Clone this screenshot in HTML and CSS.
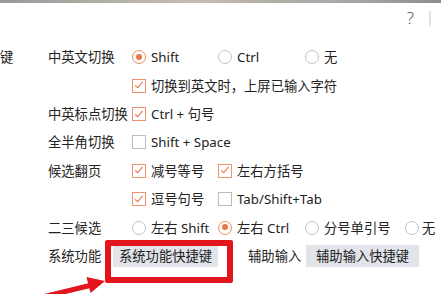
FILE: index.html
```html
<!DOCTYPE html>
<html lang="zh-CN">
<head>
<meta charset="utf-8">
<title>快捷键设置</title>
<link rel="stylesheet" href="styles.css">
</head>
<body>
<div class="topbar"></div>
<header class="titlebar">
  <span class="help">?</span>
  <span class="sep"></span>
</header>
<main class="settings">
  <div class="row">
    <div class="side">键</div>
    <div class="label">中英文切换</div>
    <div class="opts">
      <span class="opt"><i class="radio on"></i>Shift</span>
      <span class="opt"><i class="radio"></i>Ctrl</span>
      <span class="opt"><i class="radio"></i>无</span>
    </div>
  </div>
  <div class="row">
    <div class="side"></div>
    <div class="label"></div>
    <div class="opts">
      <span class="opt wide"><i class="check on"></i>切换到英文时，上屏已输入字符</span>
    </div>
  </div>
  <div class="row">
    <div class="side"></div>
    <div class="label">中英标点切换</div>
    <div class="opts">
      <span class="opt wide"><i class="check on"></i>Ctrl + 句号</span>
    </div>
  </div>
  <div class="row">
    <div class="side"></div>
    <div class="label">全半角切换</div>
    <div class="opts">
      <span class="opt wide"><i class="check"></i>Shift + Space</span>
    </div>
  </div>
  <div class="row">
    <div class="side"></div>
    <div class="label">候选翻页</div>
    <div class="opts">
      <span class="opt"><i class="check on"></i>减号等号</span>
      <span class="opt"><i class="check on"></i>左右方括号</span>
    </div>
  </div>
  <div class="row">
    <div class="side"></div>
    <div class="label"></div>
    <div class="opts">
      <span class="opt"><i class="check on"></i>逗号句号</span>
      <span class="opt"><i class="check"></i>Tab/Shift+Tab</span>
    </div>
  </div>
  <div class="row">
    <div class="side"></div>
    <div class="label">二三候选</div>
    <div class="opts">
      <span class="opt"><i class="radio"></i>左右 Shift</span>
      <span class="opt"><i class="radio on"></i>左右 Ctrl</span>
      <span class="opt"><i class="radio"></i>分号单引号</span>
      <span class="opt last"><i class="radio"></i>无</span>
    </div>
  </div>
  <div class="row btnrow">
    <div class="side"></div>
    <div class="blabel">系统功能</div>
    <button class="btn">系统功能快捷键</button>
    <div class="blabel second">辅助输入</div>
    <button class="btn wide">辅助输入快捷键</button>
  </div>
</main>
<div class="highlight"></div>
<svg class="arrow" width="441" height="294" viewBox="0 0 441 294">
  <line x1="30" y1="300" x2="90" y2="285.5" stroke="#e3141b" stroke-width="5"/>
  <polygon points="105,281 90.6,293 86.4,277" fill="#e3141b"/>
</svg>
</body>
</html>
```
FILE: styles.css
```css
html, body {
  margin: 0;
  padding: 0;
  background: #ffffff;
}
body {
  width: 441px;
  height: 294px;
  overflow: hidden;
  position: relative;
  font-family: "Noto Sans", "Noto Sans CJK SC", sans-serif;
  font-size: 13.3px;
  color: #222222;
}
.topbar {
  height: 3px;
  background: linear-gradient(90deg, #9a9896 0%, #b8b3ad 30%, #c9bdb2 45%, #b2aea9 60%, #a9a7a5 80%, #8f8d8c 100%);
}
.titlebar {
  height: 40px;
  display: flex;
  justify-content: flex-end;
  align-items: flex-start;
  gap: 15px;
  padding-right: 10px;
}
.help {
  font-family: "Open Sans", sans-serif;
  font-weight: 300;
  font-size: 17px;
  line-height: 22px;
  margin-top: 4px;
  color: #444444;
}
.sep {
  width: 2px;
  height: 15px;
  margin-top: 8px;
  background: #e2e2e2;
}
.settings {
  display: flex;
  flex-direction: column;
}
.row {
  height: 28.43px;
  display: grid;
  grid-template-columns: 48px 84px 1fr;
  align-items: center;
  line-height: 18px;
  white-space: nowrap;
}
.side {
  overflow: hidden;
}
.opts {
  display: grid;
  grid-template-columns: 86px 87px 100px auto;
  align-items: center;
}
.opt {
  display: flex;
  align-items: center;
  gap: 5px;
}
.opt.wide {
  grid-column: 1 / -1;
}
.opt.last {
  gap: 3px;
}
.radio, .check {
  display: block;
  width: 14px;
  height: 14px;
  box-sizing: border-box;
  flex: none;
  position: relative;
}
.radio {
  border-radius: 50%;
  border: 1px solid #c4c4c4;
}
.radio.on {
  border: 1.5px solid #ee8a60;
}
.radio.on::after {
  content: "";
  position: absolute;
  left: 2.5px;
  top: 2.5px;
  width: 6px;
  height: 6px;
  border-radius: 50%;
  background: #ec7446;
}
.check {
  border: 1px solid #bdbdbd;
}
.check.on {
  border: 1.5px solid #ee946c;
}
.check.on::after {
  content: "";
  position: absolute;
  left: 3.5px;
  top: 0.5px;
  width: 3px;
  height: 6.5px;
  border-right: 1.7px solid #e4683b;
  border-bottom: 1.7px solid #e4683b;
  transform: rotate(40deg);
}
.btnrow {
  display: flex;
  align-items: center;
}
.btnrow .side {
  width: 48px;
}
.blabel {
  width: 53px;
  margin-right: 12px;
}
.blabel.second {
  margin-left: 30px;
  margin-right: 5px;
}
.btn {
  font: inherit;
  color: #222222;
  background: #e1e4e9;
  border: none;
  height: 22px;
  padding: 0 6px;
  line-height: 22px;
  border-radius: 0;
}
.btn.wide {
  padding: 0 10px;
}
.highlight {
  position: absolute;
  left: 105px;
  top: 240px;
  width: 128px;
  height: 43px;
  box-sizing: border-box;
  border: 6px solid #e3141b;
  border-radius: 2px;
}
.arrow {
  position: absolute;
  left: 0;
  top: 0;
  pointer-events: none;
}
```
